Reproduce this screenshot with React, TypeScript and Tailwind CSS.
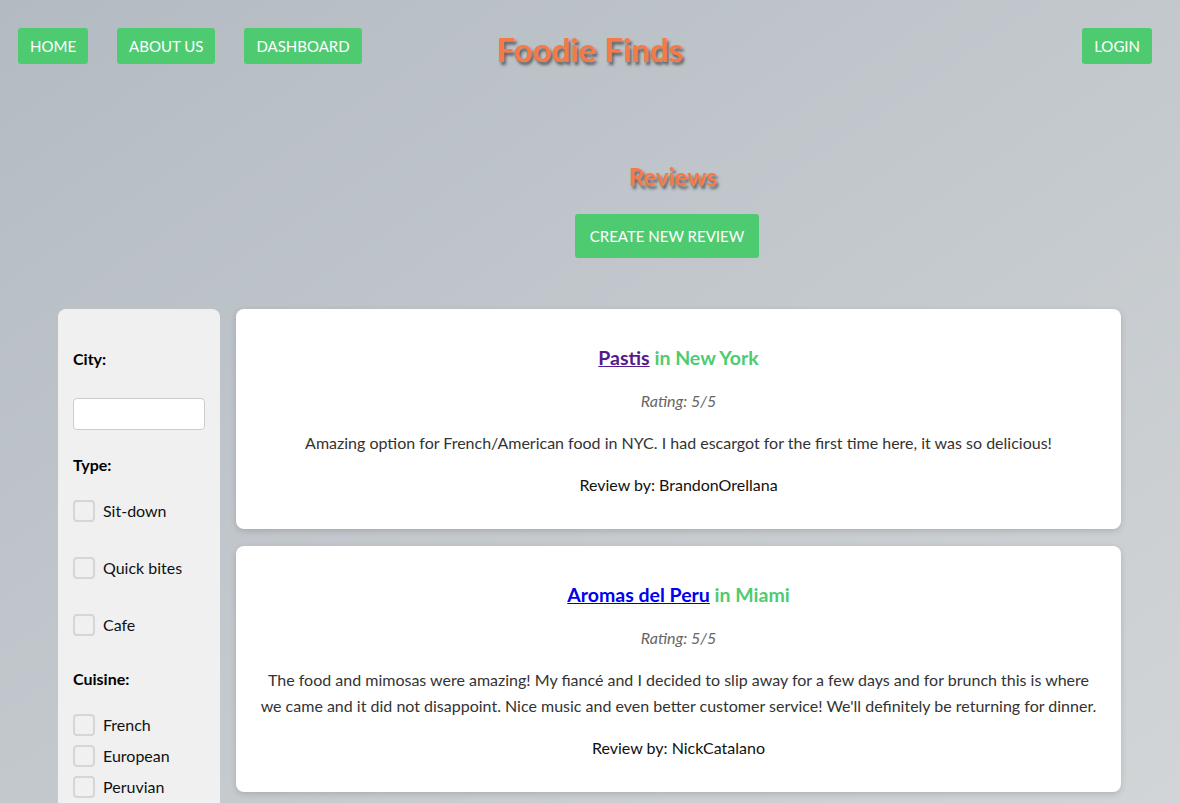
const navBtn = "rounded-[3px] bg-[#4ecb71] px-3 h-9 flex items-center text-white text-[15px] uppercase"

function Check({ label }: { label: string }) {
  return (
    <label className="flex items-center gap-2 text-[16px] leading-[22px] text-[#111]">
      <span className="h-[22px] w-[22px] rounded-[4px] border-2 border-[#d6d6d6] bg-[#f0f0f0]" />
      {label}
    </label>
  )
}

type Review = { place: string; city: string; visited?: boolean; body: string; author: string }

const reviews: Review[] = [
  {
    place: "Pastis",
    city: "New York",
    visited: true,
    body: "Amazing option for French/American food in NYC. I had escargot for the first time here, it was so delicious!",
    author: "BrandonOrellana",
  },
  {
    place: "Aromas del Peru",
    city: "Miami",
    body: "The food and mimosas were amazing! My fiancé and I decided to slip away for a few days and for brunch this is where we came and it did not disappoint. Nice music and even better customer service! We'll definitely be returning for dinner.",
    author: "NickCatalano",
  },
]

function ReviewCard({ r }: { r: Review }) {
  return (
    <div className="rounded-[8px] bg-white px-5 pt-[35px] pb-[31px] text-center shadow-[0_2px_6px_rgba(0,0,0,0.15)]">
      <h3 className="text-[19.5px] font-bold leading-[28px]">
        <a href="#" className={r.visited ? "text-[#551a8b] underline" : "text-[#0000ee] underline"}>
          {r.place}
        </a>{" "}
        <span className="text-[#4ecb71]">in {r.city}</span>
      </h3>
      <p className="mt-4 text-[16px] italic leading-[26px] text-[#666]">Rating: 5/5</p>
      <p className="mt-4 text-[16px] leading-[26px] text-[#333]">{r.body}</p>
      <p className="mt-4 text-[16px] leading-[26px] text-[#111]">Review by: {r.author}</p>
    </div>
  )
}

export default function App() {
  return (
    <div className="min-h-[803px] bg-linear-to-br from-[#b3bbc2] to-[#d2d5d7] font-['Lato','Noto_Sans',sans-serif]">
      <header className="flex items-start px-[18px] pt-7">
        <nav className="flex gap-[29px]">
          <a href="#" className={navBtn}>Home</a>
          <a href="#" className={navBtn}>About Us</a>
          <a href="#" className={navBtn}>Dashboard</a>
        </nav>
        <h1 className="ml-[135px] text-[33px] font-bold leading-[42px] text-[#f47b48] [text-shadow:2px_3px_3px_rgba(0,0,0,0.5)]">
          Foodie Finds
        </h1>
        <a href="#" className={`${navBtn} ml-auto mr-[10px]`}>Login</a>
      </header>

      <section className="flex flex-col items-center pl-[160px] pt-[93px]">
        <h2 className="ml-[6px] text-[24px] font-bold leading-[28px] text-[#f47b48] [text-shadow:2px_3px_3px_rgba(0,0,0,0.5)]">
          Reviews
        </h2>
        <button className="mt-[23px] mr-[6px] h-11 rounded-[3px] bg-[#4ecb71] px-[15px] text-[15px] uppercase text-white">
          Create new review
        </button>
      </section>

      <main className="mt-[51px] flex items-start gap-4 pl-[58px] pr-[59px]">
        <aside className="h-[494px] w-[162px] shrink-0 rounded-t-[8px] bg-[#f0f0f0] px-[15px] pt-[38px]">
          <div className="text-[16px] font-bold leading-6 text-black">City:</div>
          <input className="mt-[27px] h-8 w-[132px] rounded-[4px] border border-[#ccc] bg-white" />
          <div className="mt-[23px] text-[16px] font-bold leading-6 text-black">Type:</div>
          <div className="mt-[23px] flex flex-col gap-[35px]">
            <Check label="Sit-down" />
            <Check label="Quick bites" />
            <Check label="Cafe" />
          </div>
          <div className="mt-[31px] text-[16px] font-bold leading-6 text-black">Cuisine:</div>
          <div className="mt-[23px] flex flex-col gap-[9px]">
            <Check label="French" />
            <Check label="European" />
            <Check label="Peruvian" />
          </div>
        </aside>
        <div className="flex flex-1 flex-col gap-[17px]">
          {reviews.map((r) => (
            <ReviewCard key={r.place} r={r} />
          ))}
        </div>
      </main>
    </div>
  )
}
